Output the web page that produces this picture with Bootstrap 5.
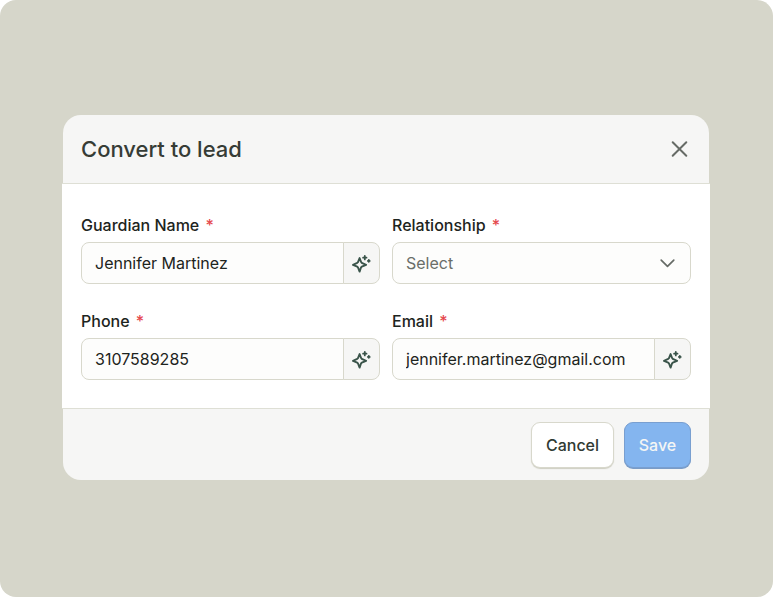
<!DOCTYPE html>
<html lang="en">
<head>
<meta charset="utf-8">
<meta name="viewport" content="width=device-width, initial-scale=1">
<title>Convert to lead</title>
<link href="https://cdn.jsdelivr.net/npm/bootstrap@5.3.0/dist/css/bootstrap.min.css" rel="stylesheet">
<style>
:root { --line: #d8d8cc; --panel: #f6f6f5; --ink: #1d2420; --green: #3a544a; }
body { font-family: Inter, "Liberation Sans", sans-serif; font-size: 16px; line-height: 24px; color: var(--ink); background: #fff; }
.backdrop-area { background: #d6d6ca; border-radius: 16px; padding: 32px 63px 34px 62px; }
.lead-head, .lead-foot { background: var(--panel); margin: 0 1px; padding: 0 18px; }
.lead-head { border-radius: 18px 18px 0 0; height: 68px; }
.lead-head h1 { font-size: 22px; line-height: 28px; font-weight: 500; color: #363c36; }
.lead-body { background: #fff; border: solid #dedfd5; border-width: 1px 0; padding: 29px 19px 28px; }
.lead-grid { row-gap: 25px; --bs-gutter-x: 12px; }
.lead-foot { border-radius: 0 0 18px 18px; padding-top: 13px; padding-bottom: 12px; }
.close-btn { width: 24px; height: 24px; color: #666b66; }
.field-label { font-weight: 500; margin-bottom: 5px; }
.req { color: #e5484d; margin-left: 2px; }
.field.form-control, .field.form-select { height: 42px; padding: 0 13px; font-size: 16px; line-height: 24px; color: var(--ink); background-color: #fdfdfc; border: 1px solid var(--line); border-radius: 8px; }
.field.form-select { color: #6a6e69; background-image: none; }
.input-group > .fill-btn { width: 37px; padding: 0; background: var(--panel); border: 1px solid var(--line); border-radius: 8px; color: var(--green); }
.chevron { top: 10px; right: 12px; color: #666b66; pointer-events: none; }
.act { height: 46px; padding: 0; font-size: 16px; line-height: 24px; font-weight: 500; border-radius: 9px; }
.foot-actions { gap: 10px; }
.act-cancel, .act-cancel:hover { background: #fff; border: 1px solid var(--line); color: #303a33; box-shadow: 0 1px 1px #cfcfc3; width: 83px; }
.act-save, .act-save:hover { background: #84b5ef; border: 1px solid #799fd0; color: #f4f6f5; box-shadow: 0 1px 0 #7a9cc7; width: 67px; }
</style>
</head>
<body>
<div class="backdrop-area min-vh-100 d-flex flex-column justify-content-center">
  <main role="dialog" aria-labelledby="dialog-title">
    <form>
      <header class="lead-head d-flex align-items-center justify-content-between">
        <h1 class="m-0" id="dialog-title">Convert to lead</h1>
        <button type="button" class="close-btn btn p-0 border-0 d-flex" aria-label="Close">
          <svg width="24" height="24" viewBox="0 0 24 24" fill="none" stroke="currentColor" stroke-width="2" stroke-linecap="round" aria-hidden="true"><path d="M5.7 5.2 19.3 18.8M19.3 5.2 5.7 18.8"/></svg>
        </button>
      </header>
      <div class="lead-body">
        <div class="row lead-grid">
          <div class="col-6">
            <label class="field-label d-block" for="guardian">Guardian Name <span class="req">*</span></label>
            <div class="input-group">
              <input class="field form-control" id="guardian" type="text" value="Jennifer Martinez" required>
              <button type="button" class="fill-btn btn" aria-label="Suggest guardian name"><svg width="20" height="20" viewBox="1 1 20 20" fill="none" stroke="currentColor" stroke-linecap="round" stroke-linejoin="round" aria-hidden="true"><path stroke-width="1.9" d="M8.6 4.1 10.1 8 10.8 8.9 15.1 10.9 10.8 12.7 10 13.5 8.6 17.6 7 13.5 6.2 12.7 2 10.9 6.2 8.9 7 8.1Z"/><path stroke-width="1.8" d="M13.8 2V5.4M12.1 3.7H15.5M17.8 6V7.8M16.9 6.9H18.7"/></svg></button>
            </div>
          </div>
          <div class="col-6">
            <label class="field-label d-block" for="relationship">Relationship <span class="req">*</span></label>
            <div class="position-relative">
              <select class="field form-select" id="relationship" required><option value="">Select</option><option>Parent</option></select>
              <svg class="chevron position-absolute" width="22" height="22" viewBox="0 0 22 22" fill="none" stroke="currentColor" stroke-width="1.7" stroke-linecap="round" stroke-linejoin="round" aria-hidden="true"><path d="M4.2 8.2 10.5 14.3 16.8 8.2"/></svg>
            </div>
          </div>
          <div class="col-6">
            <label class="field-label d-block" for="phone">Phone <span class="req">*</span></label>
            <div class="input-group">
              <input class="field form-control" id="phone" type="tel" value="3107589285" required>
              <button type="button" class="fill-btn btn" aria-label="Suggest phone"><svg width="20" height="20" viewBox="1 1 20 20" fill="none" stroke="currentColor" stroke-linecap="round" stroke-linejoin="round" aria-hidden="true"><path stroke-width="1.9" d="M8.6 4.1 10.1 8 10.8 8.9 15.1 10.9 10.8 12.7 10 13.5 8.6 17.6 7 13.5 6.2 12.7 2 10.9 6.2 8.9 7 8.1Z"/><path stroke-width="1.8" d="M13.8 2V5.4M12.1 3.7H15.5M17.8 6V7.8M16.9 6.9H18.7"/></svg></button>
            </div>
          </div>
          <div class="col-6">
            <label class="field-label d-block" for="email">Email <span class="req">*</span></label>
            <div class="input-group">
              <input class="field form-control" id="email" type="email" value="jennifer.martinez@gmail.com" required>
              <button type="button" class="fill-btn btn" aria-label="Suggest email"><svg width="20" height="20" viewBox="1 1 20 20" fill="none" stroke="currentColor" stroke-linecap="round" stroke-linejoin="round" aria-hidden="true"><path stroke-width="1.9" d="M8.6 4.1 10.1 8 10.8 8.9 15.1 10.9 10.8 12.7 10 13.5 8.6 17.6 7 13.5 6.2 12.7 2 10.9 6.2 8.9 7 8.1Z"/><path stroke-width="1.8" d="M13.8 2V5.4M12.1 3.7H15.5M17.8 6V7.8M16.9 6.9H18.7"/></svg></button>
            </div>
          </div>
        </div>
      </div>
      <footer class="lead-foot foot-actions d-flex justify-content-end">
        <button type="button" class="act act-cancel btn">Cancel</button>
        <button type="submit" class="act act-save btn">Save</button>
      </footer>
    </form>
  </main>
</div>
<script src="https://cdn.jsdelivr.net/npm/bootstrap@5.3.0/dist/js/bootstrap.bundle.min.js"></script>
</body>
</html>
